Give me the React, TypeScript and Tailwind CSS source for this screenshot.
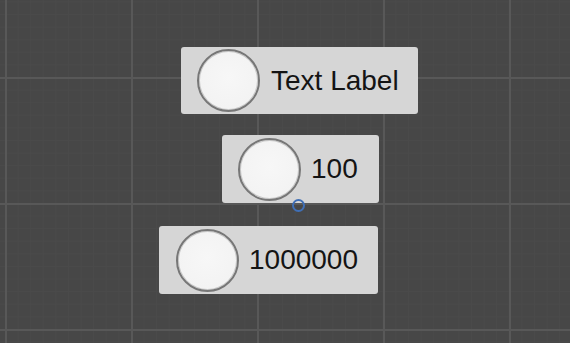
import React from "react";

function Knob() {
  return (
    <div className="w-[63px] h-[63px] shrink-0 rounded-full border-2 border-[#777777] bg-[radial-gradient(circle_at_50%_45%,#f7f7f7_0%,#f3f3f3_70%,#e6e6e6_100%)] shadow-[inset_0_0_0_1px_#c9c9c9]" />
  );
}

function Panel({ label, className, textClass }: { label: string; className: string; textClass: string }) {
  return (
    <div className={"flex items-center rounded-[3px] bg-[#d6d6d6] " + className}>
      <Knob />
      <span className={"text-[28px] leading-none text-[#141414] whitespace-nowrap " + textClass}>{label}</span>
    </div>
  );
}

export default function App() {
  return (
    <div
      className="relative w-[570px] h-[343px] overflow-hidden flex flex-col items-start pt-[47px] bg-[#474747] bg-[linear-gradient(to_right,#585858_2px,transparent_2px),linear-gradient(to_bottom,#585858_2px,transparent_2px),linear-gradient(to_right,#4a4a4a_1px,transparent_1px),linear-gradient(to_bottom,#4a4a4a_1px,transparent_1px)] bg-[length:126px_126px,126px_126px,12.6px_12.6px,12.6px_12.6px] bg-[position:5px_0px,0px_77px,5px_0px,0px_77px]"
      style={{ fontFamily: '"Liberation Sans", Arial, sans-serif' }}
    >
      <Panel label="Text Label" className="ml-[181px] w-[237px] h-[67px] pl-[16px]" textClass="ml-[11px]" />
      <Panel label="100" className="mt-[21px] ml-[222px] w-[157px] h-[68px] pl-[16px]" textClass="ml-[10px]" />
      <Panel label="1000000" className="mt-[23px] ml-[159px] w-[219px] h-[68px] pl-[17px]" textClass="ml-[10px]" />
      <div className="absolute left-[292px] top-[199px] w-[13px] h-[13px] rounded-full border-[2.5px] border-[#3f6fb6]" />
    </div>
  );
}
